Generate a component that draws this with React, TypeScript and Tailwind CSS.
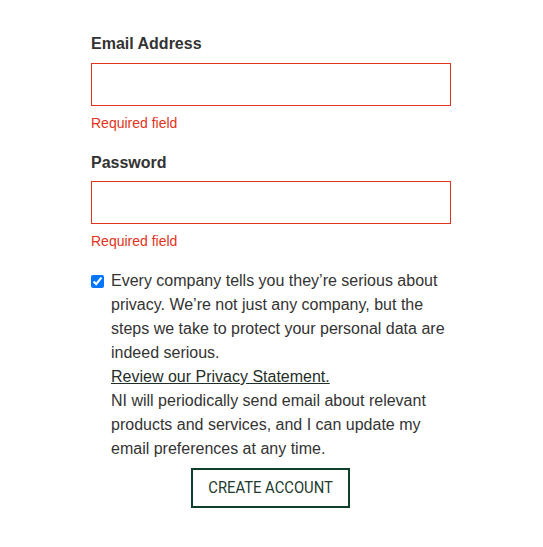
export default function App() {
  return (
    <div className="min-h-[547px] w-full bg-white font-['Liberation_Sans',Arial,sans-serif] text-[#333]">
      <form className="ml-[91px] w-[360px] pt-[33px]" onSubmit={(e) => e.preventDefault()}>
        <label className="block text-[16px] font-bold leading-[22px]">Email Address</label>
        <input
          type="email"
          className="mt-[8px] block h-[43px] w-[360px] border border-[#e2331a] px-3 outline-none"
        />
        <p className="mt-[9px] text-[14px] leading-[17px] text-[#e2331a]">Required field</p>

        <label className="mt-[20px] block text-[16px] font-bold leading-[22px]">Password</label>
        <input
          type="password"
          className="mt-[7px] block h-[43px] w-[360px] border border-[#e2331a] px-3 outline-none"
        />
        <p className="mt-[9px] text-[14px] leading-[17px] text-[#e2331a]">Required field</p>

        <div className="mt-[19px] flex items-start">
          <input
            type="checkbox"
            defaultChecked
            className="mt-[6px] h-[13px] w-[13px] shrink-0 accent-[#0075ff]"
          />
          <div className="ml-[7px] text-[16px] leading-[24px] text-[#333]">
            <p>
              Every company tells you they’re serious about privacy. We’re not just any company, but
              the steps we take to protect your personal data are indeed serious.
            </p>
            <a href="#" className="block underline text-[#1f2f28]">
              Review our Privacy Statement.
            </a>
            <p>
              NI will periodically send email about relevant products and services, and I can update
              my email preferences at any time.
            </p>
          </div>
        </div>

        <div className="mt-[7px] flex justify-center pr-[1px]">
          <button
            type="submit"
            className="flex h-[40px] w-[159px] items-center justify-center border-2 border-[#0e3f28] font-['Roboto',sans-serif] text-[17px] text-[#1b3a2d]"
          >
            <span className="inline-block whitespace-nowrap scale-x-[0.87]">CREATE ACCOUNT</span>
          </button>
        </div>
      </form>
    </div>
  );
}
